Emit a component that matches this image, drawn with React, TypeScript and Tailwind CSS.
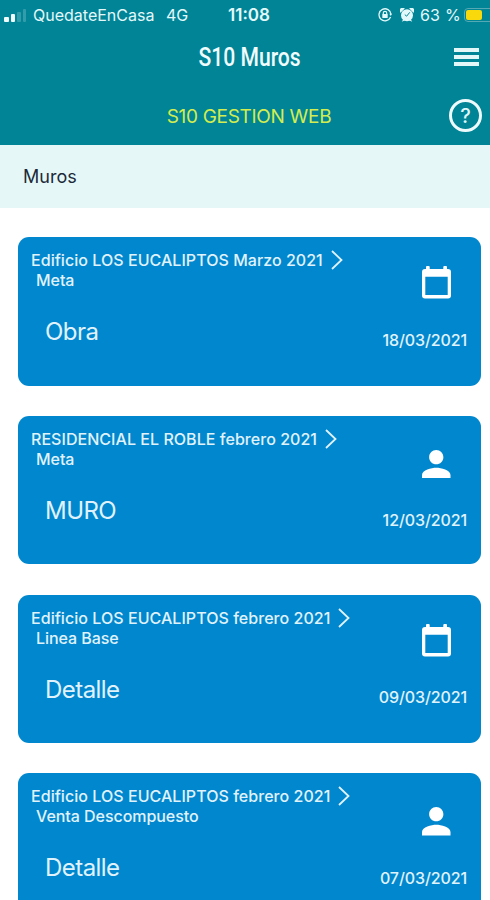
import { clsx } from "clsx";

type Wall = {
  project: string;
  kind: string;
  title: string;
  date: string;
  icon: "calendar" | "person";
};

const walls: Wall[] = [
  { project: "Edificio LOS EUCALIPTOS Marzo 2021", kind: "Meta", title: "Obra", date: "18/03/2021", icon: "calendar" },
  { project: "RESIDENCIAL EL ROBLE febrero 2021", kind: "Meta", title: "MURO", date: "12/03/2021", icon: "person" },
  { project: "Edificio LOS EUCALIPTOS febrero 2021", kind: "Linea Base", title: "Detalle", date: "09/03/2021", icon: "calendar" },
  { project: "Edificio LOS EUCALIPTOS febrero 2021", kind: "Venta Descompuesto", title: "Detalle", date: "07/03/2021", icon: "person" }
];

function CalendarIcon() {
  return (
    <svg width="29" height="33" viewBox="0 0 29 33" fill="currentColor">
      <path
        fillRule="evenodd"
        d="M5 0h1.700a1 1 0 0 1 1 1v2h13.600V1a1 1 0 0 1 1-1H24a1 1 0 0 1 1 1v2h1a3 3 0 0 1 3 3v23.400a3 3 0 0 1-3 3H3a3 3 0 0 1-3-3V6a3 3 0 0 1 3-3h1V1a1 1 0 0 1 1-1zM3.300 10.800v18.200h22.400V10.800z"
      />
    </svg>
  );
}

function PersonIcon() {
  return (
    <svg width="28.500" height="28.500" viewBox="4 4 16 16" fill="currentColor">
      <path d="M12 12c2.210 0 4-1.790 4-4s-1.790-4-4-4-4 1.790-4 4 1.790 4 4 4zm0 2c-2.670 0-8 1.340-8 4v2h16v-2c0-2.660-5.330-4-8-4z" />
    </svg>
  );
}

function StatusBar() {
  return (
    <div className="flex h-[30px] items-center text-[16px] leading-[30px] text-[#e3f8fa]">
      <div className="flex w-[33px] shrink-0 items-end gap-[2px] pl-[4px]">
        <span className="h-[5px] w-[5px] rounded-[1px] bg-[#f0fcfd]" />
        <span className="h-[8px] w-[4px] rounded-[1px] bg-[#f0fcfd]" />
        <span className="h-[10px] w-[4px] rounded-[1px] bg-white/20" />
        <span className="h-[13px] w-[3px] rounded-[1px] bg-white/20" />
      </div>
      <span className="w-[133px] shrink-0 whitespace-nowrap">QuedateEnCasa</span>
      <span className="w-[62px] shrink-0">4G</span>
      <span className="w-[150px] shrink-0 text-[17px] font-semibold">11:08</span>
      <svg width="14" height="14" viewBox="0 0 14 14" fill="none" stroke="currentColor" className="shrink-0">
        <path d="M12.600 9A6 6 0 1 1 13 6.400" strokeWidth="1.300" />
        <path d="M11.300 5.800h2.700l-1.200 2.200z" fill="currentColor" stroke="none" />
        <rect x="4.300" y="6" width="5.400" height="4" rx="0.500" fill="currentColor" stroke="none" />
        <path d="M5.300 6.400V5a1.700 1.700 0 0 1 3.400 0v1.400" strokeWidth="1.200" />
      </svg>
      <svg width="14" height="14" viewBox="0 0 14 14" fill="currentColor" className="ml-[8px] shrink-0">
        <circle cx="7" cy="7.300" r="6" />
        <path d="M.5 4.800A3 3 0 0 1 4.800.5zM13.500 4.800A3 3 0 0 0 9.200.5zM1.800 13.800l2-3.500 2 1.700zM12.200 13.800l-2-3.500-2 1.700z" />
        <path d="M4.800 6.600 6.600 8.200l3.200-3.900" fill="none" stroke="#008496" strokeWidth="1" />
      </svg>
      <span className="ml-[6px] shrink-0 whitespace-nowrap tracking-[0.200px]">63 %</span>
      <span className="ml-[3px] flex h-[14px] w-[32px] shrink-0 rounded-[4px] border border-[#55a9b5] p-[1px]">
        <span className="w-[16px] rounded-[2px] bg-[#fad90c]" />
      </span>
    </div>
  );
}

function Header() {
  return (
    <header className="h-[145px] overflow-hidden bg-[#008496]">
      <StatusBar />
      <div className="grid h-[54px] grid-cols-[1fr_auto_1fr] items-center pr-[11px]">
        <h1 className="col-start-2 ml-[21px] origin-center scale-x-[0.845] pt-px font-['Roboto',sans-serif] text-[25px] font-medium text-[#f0fcfd]">
          S10 Muros
        </h1>
        <button type="button" aria-label="Menú" className="flex flex-col gap-[3px] justify-self-end">
          <span className="h-[4px] w-[25px] bg-[#e3f7f9]" />
          <span className="h-[4px] w-[25px] bg-[#e3f7f9]" />
          <span className="h-[4px] w-[25px] bg-[#e3f7f9]" />
        </button>
      </div>
      <div className="grid h-[63px] grid-cols-[1fr_auto_1fr] items-center pr-[8px]">
        <h2 className="col-start-2 ml-[16px] pt-[3px] text-[19px] tracking-[-0.310px] text-[#d3ec4f]">S10 GESTION WEB</h2>
        <button
          type="button"
          aria-label="Ayuda"
          className="flex h-[33px] w-[33px] items-center justify-center justify-self-end rounded-full border-[3px] border-[#eefbfc] text-[20px] font-medium leading-none text-[#dff6f8]"
        >
          ?
        </button>
      </div>
    </header>
  );
}

function WallCard({ project, kind, title, date, icon }: Wall) {
  return (
    <article className="flex h-[148.500px] shrink-0 justify-between rounded-[11px] bg-[#0087cd] pl-[13px] pr-[14px] text-[#e0f3fc]">
      <div className="pt-[13px]">
        <p className="flex h-5 items-center whitespace-nowrap text-[16px] font-medium leading-5 tracking-[0.045px]">
          {project}
          <svg width="12" height="20" viewBox="0 0 12 20" fill="none" stroke="currentColor" strokeWidth="1.800" className="ml-[8px]">
            <path d="M1 1l9.500 9L1 19" />
          </svg>
        </p>
        <p className="pl-[5px] text-[16px] font-medium leading-5 tracking-[-0.050px]">{kind}</p>
        <h3 className="pl-[14px] pt-[27px] text-[24px] leading-[30px] tracking-[-0.550px]">{title}</h3>
      </div>
      <div className="flex flex-col items-end">
        <div
          className={clsx(
            "mr-[16px] flex w-[29px] justify-center text-white",
            icon === "calendar" ? "h-[92.500px] pt-[29px]" : "h-[94.500px] pt-[34px]"
          )}
        >
          {icon === "calendar" ? <CalendarIcon /> : <PersonIcon />}
        </div>
        <time className="text-[16px] font-medium leading-5 tracking-[-0.100px]">{date}</time>
      </div>
    </article>
  );
}

export default function App() {
  return (
    <div className="flex h-[900px] w-[490px] flex-col overflow-hidden bg-white font-['Inter',sans-serif]">
      <Header />
      <div className="flex h-[63px] shrink-0 items-center bg-[#e6f7f8] pl-[23px] text-[18px] text-[#1c2a38]">Muros</div>
      <main className="flex min-h-0 flex-1 flex-col gap-[30.300px] overflow-hidden pl-[18px] pr-[9px] pt-[29px]">
        {walls.map((wall) => (
          <WallCard key={wall.date} {...wall} />
        ))}
      </main>
    </div>
  );
}
